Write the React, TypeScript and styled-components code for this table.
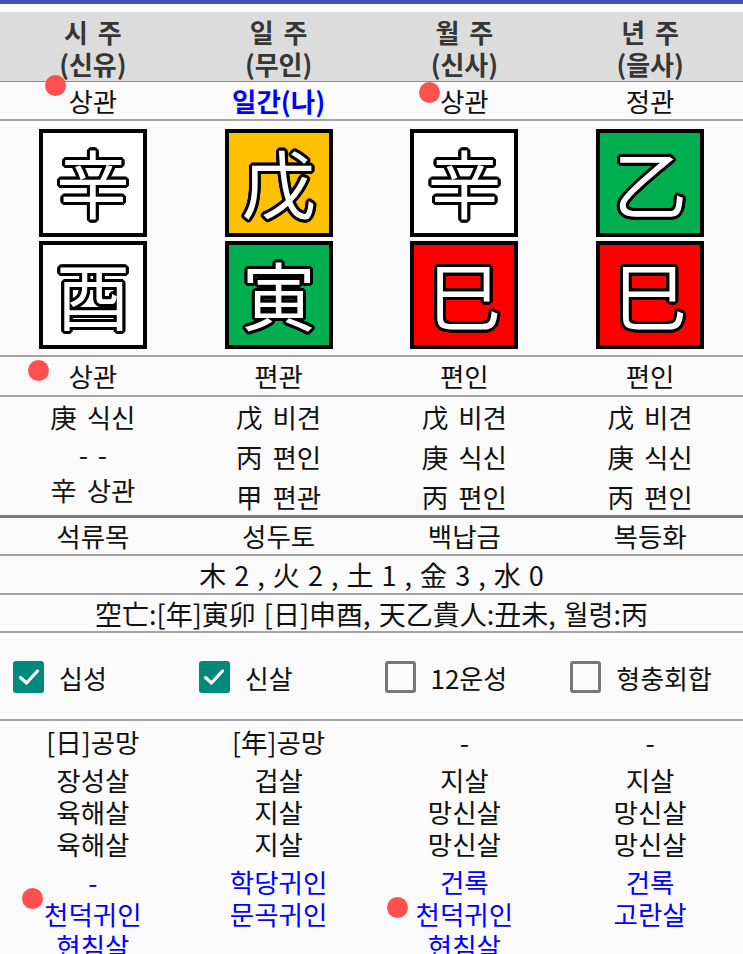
import React from "react";
import styled, { createGlobalStyle } from "styled-components";

const GlobalStyle = createGlobalStyle`
  html, body { margin: 0; padding: 0; background: #fafafa; }
  body { font-family: "Noto Sans CJK KR", "Noto Sans", Roboto, sans-serif; color: #111; }
  * { box-sizing: border-box; }
`;

const Page = styled.div`
  position: relative;
  width: 743px;
  min-height: 954px;
  background: #fafafa;
  overflow: hidden;
  word-spacing: 4px;
`;

const TopBar = styled.div`
  height: 4px;
  background: #3f51b5;
  margin-bottom: 8px;
`;

const Grid4 = styled.div`
  display: grid;
  grid-template-columns: repeat(4, 1fr);
`;

const HeaderRow = styled(Grid4)`
  background: #dcdcdc;
  padding: 4px 0 1px;
  border-bottom: 1px solid #8c8c8c;
`;

const HeaderCell = styled.div`
  text-align: center;
  font-weight: 700;
  color: #363636;
  font-size: 26px;
  line-height: 32px;
`;

const Row = styled(Grid4)<{ $h: number; $line?: number; $top?: boolean }>`
  height: ${(p) => p.$h}px;
  border-bottom: ${(p) => p.$line ?? 2}px solid ${(p) => ((p.$line ?? 2) > 2 ? "#7a7a7a" : "#a3a3a3")};
  align-items: ${(p) => (p.$top ? "start" : "center")};
`;

const Cell = styled.div<{ $blue?: boolean; $bold?: boolean }>`
  text-align: center;
  font-size: 26.5px;
  line-height: 36px;
  color: ${(p) => (p.$blue ? "#0000ff" : "#111")};
  font-weight: ${(p) => (p.$bold ? 700 : 400)};
`;

const WideRow = styled.div<{ $h: number }>`
  height: ${(p) => p.$h}px;
  border-bottom: 2px solid #a3a3a3;
  display: flex;
  align-items: center;
  justify-content: center;
  font-size: 27px;
  word-spacing: 2px;
  color: #111;
`;

const BoxSection = styled(Grid4)`
  padding: 8px 0 6px;
  border-bottom: 2px solid #a3a3a3;
`;

const Pillar = styled.div`
  display: flex;
  flex-direction: column;
  align-items: center;
  gap: 4px;
`;

const CharBox = styled.div<{ $bg: string }>`
  width: 108px;
  height: 108px;
  border: 4px solid #000;
  background: ${(p) => p.$bg};
  display: flex;
  align-items: center;
  justify-content: center;
  font-size: 74px;
  line-height: 1;
  color: #fff;
  padding-bottom: 4px;
  text-shadow:
    -3px 0 0 #000, 3px 0 0 #000, 0 -3px 0 #000, 0 3px 0 #000,
    -2px -2px 0 #000, 2px -2px 0 #000, -2px 2px 0 #000, 2px 2px 0 #000,
    -3px -1px 0 #000, 3px -1px 0 #000, -3px 1px 0 #000, 3px 1px 0 #000,
    -1px -3px 0 #000, 1px -3px 0 #000, -1px 3px 0 #000, 1px 3px 0 #000,
    0 0 3px #000;
`;

const StemCol = styled.div`
  display: flex;
  flex-direction: column;
  align-items: center;
`;

const StemLine = styled.div<{ $h?: number }>`
  height: ${(p) => p.$h ?? 40}px;
  line-height: ${(p) => p.$h ?? 40}px;
  font-size: 26.5px;
  white-space: pre;
`;

const CheckRow = styled(Grid4)`
  height: 88px;
  padding-top: 2px;
  border-bottom: 2px solid #a3a3a3;
  align-items: center;
`;

const CheckItem = styled.label`
  display: flex;
  align-items: center;
  gap: 15px;
  padding-left: 13px;
  font-size: 26px;
  color: #111;
`;

const Box = styled.span<{ $checked: boolean }>`
  width: 31px;
  height: 32px;
  border-radius: 3px;
  display: inline-flex;
  align-items: center;
  justify-content: center;
  flex: none;
  background: ${(p) => (p.$checked ? "#00897b" : "transparent")};
  border: ${(p) => (p.$checked ? "none" : "3px solid #767676")};
`;

const ShinsalGrid = styled(Grid4)`
  padding-top: 5px;
`;

const ShinsalCol = styled.div`
  display: flex;
  flex-direction: column;
  align-items: center;
  gap: 6px;
`;

const Group = styled.div`
  display: flex;
  flex-direction: column;
  align-items: center;
`;

const ShLine = styled.div<{ $blue?: boolean }>`
  height: 32px;
  line-height: 32px;
  font-size: 26.5px;
  color: ${(p) => (p.$blue ? "#0000ff" : "#111")};
`;

const Dot = styled.div`
  position: absolute;
  width: 21px;
  height: 21px;
  border-radius: 50%;
  background: #ff5050;
`;

const heads = [
  ["시 주", "(신유)"],
  ["일 주", "(무인)"],
  ["월 주", "(신사)"],
  ["년 주", "(을사)"],
];

const pillars = [
  { top: ["辛", "#ffffff"], bottom: ["酉", "#ffffff"] },
  { top: ["戊", "#ffc000"], bottom: ["寅", "#00b050"] },
  { top: ["辛", "#ffffff"], bottom: ["巳", "#ff0000"] },
  { top: ["乙", "#00b050"], bottom: ["巳", "#ff0000"] },
];

const stems: { t: string; h?: number }[][] = [
  [{ t: "庚 식신" }, { t: "- -", h: 33 }, { t: "辛 상관" }],
  [{ t: "戊 비견" }, { t: "丙 편인" }, { t: "甲 편관" }],
  [{ t: "戊 비견" }, { t: "庚 식신" }, { t: "丙 편인" }],
  [{ t: "戊 비견" }, { t: "庚 식신" }, { t: "丙 편인" }],
];

const shinsal = [
  { a: "[日]공망", b: ["장성살", "육해살", "육해살"], c: ["-", "천덕귀인", "현침살"] },
  { a: "[年]공망", b: ["겁살", "지살", "지살"], c: ["학당귀인", "문곡귀인"] },
  { a: "-", b: ["지살", "망신살", "망신살"], c: ["건록", "천덕귀인", "현침살"] },
  { a: "-", b: ["지살", "망신살", "망신살"], c: ["건록", "고란살"] },
];

const checks = [
  { label: "십성", on: true },
  { label: "신살", on: true },
  { label: "12운성", on: false },
  { label: "형충회합", on: false },
];

const dots = [
  [45, 75],
  [419, 82],
  [28, 360],
  [22, 888],
  [387, 897],
];

const Check = () => (
  <svg width="22" height="18" viewBox="0 0 22 18">
    <path d="M2.5 9.5 L8.5 15 L19.5 3" fill="none" stroke="#fff" strokeWidth="3.2" strokeLinecap="round" strokeLinejoin="round" />
  </svg>
);

export default function App() {
  return (
    <Page>
      <GlobalStyle />
      <TopBar />
      <HeaderRow>
        {heads.map(([a, b], i) => (
          <HeaderCell key={i}>
            {a}
            <br />
            {b}
          </HeaderCell>
        ))}
      </HeaderRow>
      <Row $h={39}>
        <Cell>상관</Cell>
        <Cell $blue $bold>일간(나)</Cell>
        <Cell>상관</Cell>
        <Cell>정관</Cell>
      </Row>
      <BoxSection>
        {pillars.map((p, i) => (
          <Pillar key={i}>
            <CharBox $bg={p.top[1]}>{p.top[0]}</CharBox>
            <CharBox $bg={p.bottom[1]}>{p.bottom[0]}</CharBox>
          </Pillar>
        ))}
      </BoxSection>
      <Row $h={40}>
        <Cell>상관</Cell>
        <Cell>편관</Cell>
        <Cell>편인</Cell>
        <Cell>편인</Cell>
      </Row>
      <Row $h={121} $line={3} $top>
        {stems.map((col, i) => (
          <StemCol key={i}>
            {col.map((s, j) => (
              <StemLine key={j} $h={s.h}>
                {s.t}
              </StemLine>
            ))}
          </StemCol>
        ))}
      </Row>
      <Row $h={38}>
        <Cell>석류목</Cell>
        <Cell>성두토</Cell>
        <Cell>백납금</Cell>
        <Cell>복등화</Cell>
      </Row>
      <WideRow $h={39}>木 2 , 火 2 , 土 1 , 金 3 , 水 0</WideRow>
      <WideRow $h={38}>空亡:[年]寅卯 [日]申酉, 天乙貴人:丑未, 월령:丙</WideRow>
      <CheckRow>
        {checks.map((c, i) => (
          <CheckItem key={i}>
            <Box $checked={c.on}>{c.on && <Check />}</Box>
            {c.label}
          </CheckItem>
        ))}
      </CheckRow>
      <ShinsalGrid>
        {shinsal.map((s, i) => (
          <ShinsalCol key={i}>
            <Group>
              <ShLine>{s.a}</ShLine>
            </Group>
            <Group>
              {s.b.map((t, j) => (
                <ShLine key={j}>{t}</ShLine>
              ))}
            </Group>
            <Group>
              {s.c.map((t, j) => (
                <ShLine key={j} $blue>
                  {t}
                </ShLine>
              ))}
            </Group>
          </ShinsalCol>
        ))}
      </ShinsalGrid>
      {dots.map(([x, y], i) => (
        <Dot key={i} style={{ left: x, top: y }} />
      ))}
    </Page>
  );
}
